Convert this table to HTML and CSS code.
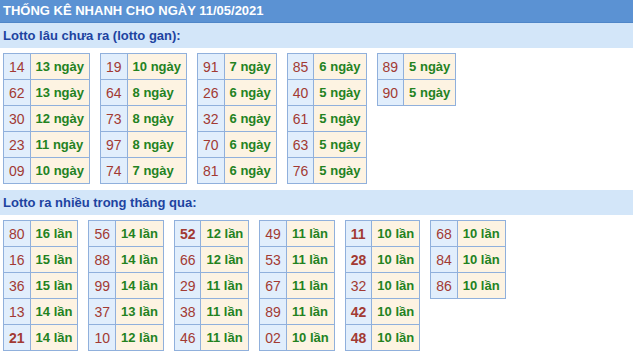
FILE: index.html
```html
<!DOCTYPE html>
<html lang="vi">
<head>
<meta charset="utf-8">
<title>Thống kê nhanh</title>
<link rel="stylesheet" href="styles.css">
</head>
<body>
<div class="title">THỐNG KÊ NHANH CHO NGÀY 11/05/2021</div>

<div class="sub">Lotto lâu chưa ra (lotto gan):</div>
<div class="group">
  <table class="lt">
    <tr><td class="n">14</td><td class="v">13 ngày</td></tr>
    <tr><td class="n">62</td><td class="v">13 ngày</td></tr>
    <tr><td class="n">30</td><td class="v">12 ngày</td></tr>
    <tr><td class="n">23</td><td class="v">11 ngày</td></tr>
    <tr><td class="n">09</td><td class="v">10 ngày</td></tr>
  </table>
  <table class="lt">
    <tr><td class="n">19</td><td class="v">10 ngày</td></tr>
    <tr><td class="n">64</td><td class="v">8 ngày</td></tr>
    <tr><td class="n">73</td><td class="v">8 ngày</td></tr>
    <tr><td class="n">97</td><td class="v">8 ngày</td></tr>
    <tr><td class="n">74</td><td class="v">7 ngày</td></tr>
  </table>
  <table class="lt">
    <tr><td class="n">91</td><td class="v">7 ngày</td></tr>
    <tr><td class="n">26</td><td class="v">6 ngày</td></tr>
    <tr><td class="n">32</td><td class="v">6 ngày</td></tr>
    <tr><td class="n">70</td><td class="v">6 ngày</td></tr>
    <tr><td class="n">81</td><td class="v">6 ngày</td></tr>
  </table>
  <table class="lt">
    <tr><td class="n">85</td><td class="v">6 ngày</td></tr>
    <tr><td class="n">40</td><td class="v">5 ngày</td></tr>
    <tr><td class="n">61</td><td class="v">5 ngày</td></tr>
    <tr><td class="n">63</td><td class="v">5 ngày</td></tr>
    <tr><td class="n">76</td><td class="v">5 ngày</td></tr>
  </table>
  <table class="lt">
    <tr><td class="n">89</td><td class="v">5 ngày</td></tr>
    <tr><td class="n">90</td><td class="v">5 ngày</td></tr>
  </table>
</div>

<div class="sub sub2">Lotto ra nhiều trong tháng qua:</div>
<div class="group">
  <table class="lt">
    <tr><td class="n">80</td><td class="v">16 lần</td></tr>
    <tr><td class="n">16</td><td class="v">15 lần</td></tr>
    <tr><td class="n">36</td><td class="v">15 lần</td></tr>
    <tr><td class="n">13</td><td class="v">14 lần</td></tr>
    <tr><td class="n b">21</td><td class="v">14 lần</td></tr>
  </table>
  <table class="lt">
    <tr><td class="n">56</td><td class="v">14 lần</td></tr>
    <tr><td class="n">88</td><td class="v">14 lần</td></tr>
    <tr><td class="n">99</td><td class="v">14 lần</td></tr>
    <tr><td class="n">37</td><td class="v">13 lần</td></tr>
    <tr><td class="n">10</td><td class="v">12 lần</td></tr>
  </table>
  <table class="lt">
    <tr><td class="n b">52</td><td class="v">12 lần</td></tr>
    <tr><td class="n">66</td><td class="v">12 lần</td></tr>
    <tr><td class="n">29</td><td class="v">11 lần</td></tr>
    <tr><td class="n">38</td><td class="v">11 lần</td></tr>
    <tr><td class="n">46</td><td class="v">11 lần</td></tr>
  </table>
  <table class="lt">
    <tr><td class="n">49</td><td class="v">11 lần</td></tr>
    <tr><td class="n">53</td><td class="v">11 lần</td></tr>
    <tr><td class="n">67</td><td class="v">11 lần</td></tr>
    <tr><td class="n">89</td><td class="v">11 lần</td></tr>
    <tr><td class="n">02</td><td class="v">10 lần</td></tr>
  </table>
  <table class="lt">
    <tr><td class="n b">11</td><td class="v">10 lần</td></tr>
    <tr><td class="n b">28</td><td class="v">10 lần</td></tr>
    <tr><td class="n">32</td><td class="v">10 lần</td></tr>
    <tr><td class="n b">42</td><td class="v">10 lần</td></tr>
    <tr><td class="n b">48</td><td class="v">10 lần</td></tr>
  </table>
  <table class="lt">
    <tr><td class="n">68</td><td class="v">10 lần</td></tr>
    <tr><td class="n">84</td><td class="v">10 lần</td></tr>
    <tr><td class="n">86</td><td class="v">10 lần</td></tr>
  </table>
</div>
</body>
</html>
```
FILE: styles.css
```css
html, body {
  margin: 0;
  padding: 0;
  background: #ffffff;
  font-family: "Liberation Sans", Arial, sans-serif;
  font-size: 13px;
}

.title {
  height: 22px;
  line-height: 22px;
  padding: 0 3px;
  background: #5b92d3;
  border-bottom: 1px solid #4f86c8;
  color: #ffffff;
  font-weight: bold;
  font-size: 13px;
}

.sub {
  height: 25px;
  line-height: 25px;
  padding: 0 3px;
  background: #d3e6f9;
  color: #1d43a0;
  font-weight: bold;
  font-size: 13px;
}

.sub2 {
  margin-top: 6px;
}

.group {
  display: flex;
  align-items: flex-start;
  gap: 10px;
  padding: 5px 3px 0;
}

.lt {
  border-collapse: collapse;
}

.lt td {
  height: 25px;
  padding: 0 5px;
  border: 1px solid #90b0dc;
  white-space: nowrap;
}

.lt td.n {
  background: #e1eefc;
  color: #a23a33;
  font-size: 14px;
}

.lt td.n.b {
  font-weight: bold;
}

.lt td.v {
  background: #fdf3e2;
  color: #23821f;
  font-weight: bold;
  font-size: 13px;
}
```
